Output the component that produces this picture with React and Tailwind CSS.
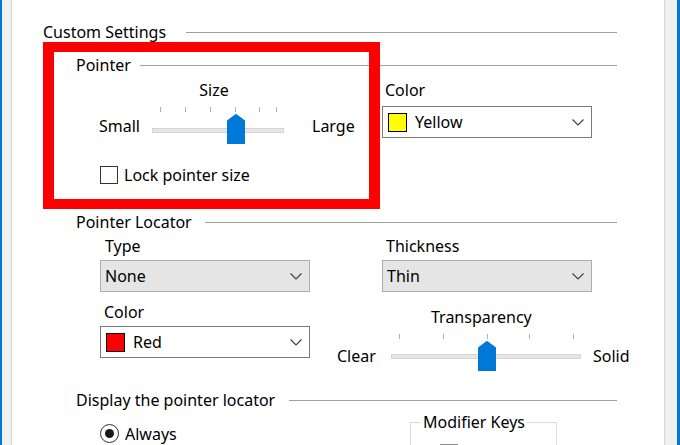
import React from 'react';

// groupbox heading: text in a fixed box, etched line to the right
const Header = ({ title, w }) => (
  <div className="flex h-[20px] items-center">
    <span className={`${w} shrink-0 whitespace-nowrap`}>{title}</span>
    <div className="h-px flex-1 bg-[#a0a0a0]" />
  </div>
);

const Chevron = () => (
  <svg width="12" height="7" viewBox="0 0 12 7" className="ml-auto mr-[7px] shrink-0">
    <path d="M0.5 0.5 L6 6 L11.5 0.5" fill="none" stroke="#3c3c3c" strokeWidth="1.1" />
  </svg>
);

const Combo = ({ text, swatch, gray, className = '' }) => (
  <div
    className={`flex h-[32px] w-[210px] items-center border ${
      gray ? 'border-[#adadad] bg-[#e5e5e5] pl-[4px]' : 'border-[#7a7a7a] bg-white'
    } ${className}`}
  >
    {swatch && <span className={`ml-[5px] h-[19px] w-[19px] border border-black ${swatch}`} />}
    <span className={swatch ? 'ml-[8px]' : ''}>{text}</span>
    <Chevron />
  </div>
);

// trackbar drawing: ticks, track, thumb
const Slider = ({ width, ticks, thumb, trackTop }) => (
  <svg width={width} height="42" className="shrink-0">
    {ticks.map((x) => (
      <rect key={x} x={x} y="2" width="1" height="5" fill="#b0b0b0" />
    ))}
    <rect x="4.5" y={trackTop + 0.5} width={width - 9} height="4" fill="#e7e7e7" stroke="#d4d4d4" />
    <path
      transform={`translate(${thumb} 9)`}
      d="M0 6.5 L8 0.4 Q9 -0.2 10 0.4 L18 6.5 V30 H0 Z"
      fill="#0078d7"
    />
  </svg>
);

export default function App() {
  return (
    <div className="relative flex h-[445px] w-[680px] overflow-hidden bg-white font-['Noto_Sans',sans-serif] text-[16px] leading-[20px] text-black">
      {/* left window edge */}
      <div className="w-[2px] shrink-0 bg-[#0078d7]" />
      <div className="w-[9px] shrink-0 bg-[#f0f0f0]" />
      <div className="w-px shrink-0 bg-[#d6d6d6]" />

      <div className="flex-1 pl-[31px] pt-[22px]">
        <div className="w-[574px]">
          <Header title="Custom Settings" w="w-[143px]" />

          <div className="mt-[13px] pl-[33px]">
            <Header title="Pointer" w="w-[64px]" />
            <div className="flex h-[137px]">
              <div className="w-[306px] shrink-0">
                <div className="ml-[68px] mt-[5px] w-[140px] text-center">Size</div>
                <div className="mt-[5px] flex items-center pl-[23px]">
                  <span className="w-[49px] shrink-0">Small</span>
                  <Slider width={140} ticks={[12, 37, 62, 87, 111, 128]} thumb={79} trackTop={23} />
                  <span className="ml-[24px]">Large</span>
                </div>
                <div className="mt-[18px] flex h-[20px] items-center pl-[24px]">
                  <span className="h-[18px] w-[18px] border border-[#333333] bg-white" />
                  <span className="ml-[6px]">Lock pointer size</span>
                </div>
              </div>
              <div>
                <div className="mt-[5px] pl-[3px]">Color</div>
                <Combo text="Yellow" swatch="bg-[#ffff00]" className="mt-[6px]" />
              </div>
            </div>

            <Header title="Pointer Locator" w="w-[129px]" />
            <div className="h-[158px] pl-[24px] pt-[4px]">
              <div className="flex">
                <div className="w-[282px] shrink-0">
                  <div className="pl-[5px]">Type</div>
                  <Combo text="None" gray className="mt-[4px]" />
                </div>
                <div>
                  <div className="pl-[4px]">Thickness</div>
                  <Combo text="Thin" gray className="mt-[4px]" />
                </div>
              </div>
              <div className="mt-[10px] flex">
                <div className="w-[237px] shrink-0">
                  <div className="pl-[4px]">Color</div>
                  <Combo text="Red" swatch="bg-[#ff0000]" className="mt-[4px]" />
                </div>
                <div className="shrink-0">
                  <div className="ml-[94px] mt-[5px] w-[100px] whitespace-nowrap text-center">Transparency</div>
                  <div className="mt-[5px] flex items-start">
                    <span className="mt-[14px] w-[50px] shrink-0">Clear</span>
                    <Slider width={198} ticks={[12, 56, 100, 142, 186]} thumb={91} trackTop={22} />
                    <span className="ml-[8px] mt-[14px]">Solid</span>
                  </div>
                </div>
              </div>
            </div>

            <Header title="Display the pointer locator" w="w-[213px]" />
            <div className="flex pl-[24px]">
              <div className="mt-[14px] flex h-[19px] w-[310px] shrink-0 items-center">
                <span className="flex h-[19px] w-[19px] items-center justify-center rounded-full border border-[#333333]">
                  <span className="h-[9px] w-[9px] rounded-full bg-[#1a1a1a]" />
                </span>
                <span className="ml-[6px]">Always</span>
              </div>
              <fieldset className="mt-[2px] h-[70px] w-[147px] shrink-0 border border-[#dcdcdc] px-[10px]">
                <legend className="px-[2px]">Modifier Keys</legend>
                <div className="ml-[19px] mt-[12px] h-[18px] w-[18px] border border-[#8a8a8a] bg-white" />
              </fieldset>
            </div>
          </div>
        </div>
      </div>

      {/* right window edge */}
      <div className="w-px shrink-0 bg-[#d6d6d6]" />
      <div className="w-[12px] shrink-0 bg-[#f0f0f0]" />
      <div className="w-[3px] shrink-0 bg-[#0078d7]" />

      {/* red highlight annotation */}
      <div className="pointer-events-none absolute left-[43px] top-[42px] h-[167px] w-[337px] border-x-[11px] border-y-[10px] border-[#ff0000]" />
    </div>
  );
}
